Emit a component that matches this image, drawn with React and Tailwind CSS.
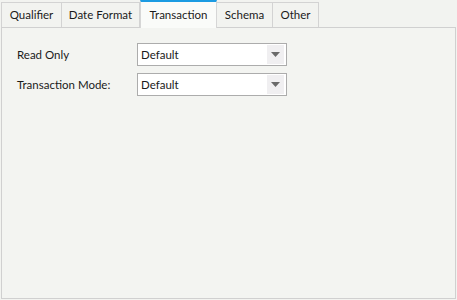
import React from "react";

function Tab({ label, active, w }) {
  if (active) {
    return (
      <div
        className="relative z-10 -mb-px flex h-[28px] items-center justify-center border-t-2 border-r border-l border-t-[#1c9be2] border-r-[#d6d6d6] border-l-[#d6d6d6] bg-[#fafbf9] pb-px text-[11.5px] text-[#1a1a1a]"
        style={{ width: w }}
      >
        {label}
      </div>
    );
  }
  return (
    <div
      className="-ml-px flex h-[25px] items-center justify-center border-t border-r border-l border-[#d3d3d3] bg-[#f2f3f0] text-[11.5px] text-[#1a1a1a]"
      style={{ width: w }}
    >
      {label}
    </div>
  );
}

function Select() {
  return (
    <div className="flex h-[23px] w-[150px] items-center border border-[#acacac] bg-white pl-[3px] pr-[2px]">
      <span className="flex-1 text-[11.5px] text-[#1a1a1a]">Default</span>
      <div className="flex h-[19px] w-[17px] items-center justify-center bg-[#f0eff1]">
        <svg width="9" height="5" viewBox="0 0 9 5">
          <path d="M0 0H9L4.5 5Z" fill="#6a6a6a" />
        </svg>
      </div>
    </div>
  );
}

export default function App() {
  return (
    <div
      className="flex h-[300px] w-[457px] flex-col bg-[#f2f3f0] pl-px pr-[1px] pb-px"
      style={{ fontFamily: 'Lato, "Liberation Sans", sans-serif' }}
    >
      <div className="flex h-[27px] items-end">
        <div className="ml-px flex items-end">
          <Tab label="Qualifier" w={61} />
          <Tab label="Date Format" w={79} />
        </div>
        <Tab label="Transaction" active w={77} />
        <div className="flex items-end">
          <Tab label="Schema" w={57} />
          <Tab label="Other" w={47} />
        </div>
      </div>
      <div className="flex flex-1 flex-col gap-[7px] border border-[#d0d0d0] bg-[#f3f4f1] pt-[15px] pl-[15px]">
        <div className="flex items-center">
          <span className="w-[120px] text-[11.5px] text-[#1a1a1a]">Read Only</span>
          <Select />
        </div>
        <div className="flex items-center">
          <span className="w-[120px] text-[11.5px] text-[#1a1a1a]">Transaction Mode:</span>
          <Select />
        </div>
      </div>
    </div>
  );
}
